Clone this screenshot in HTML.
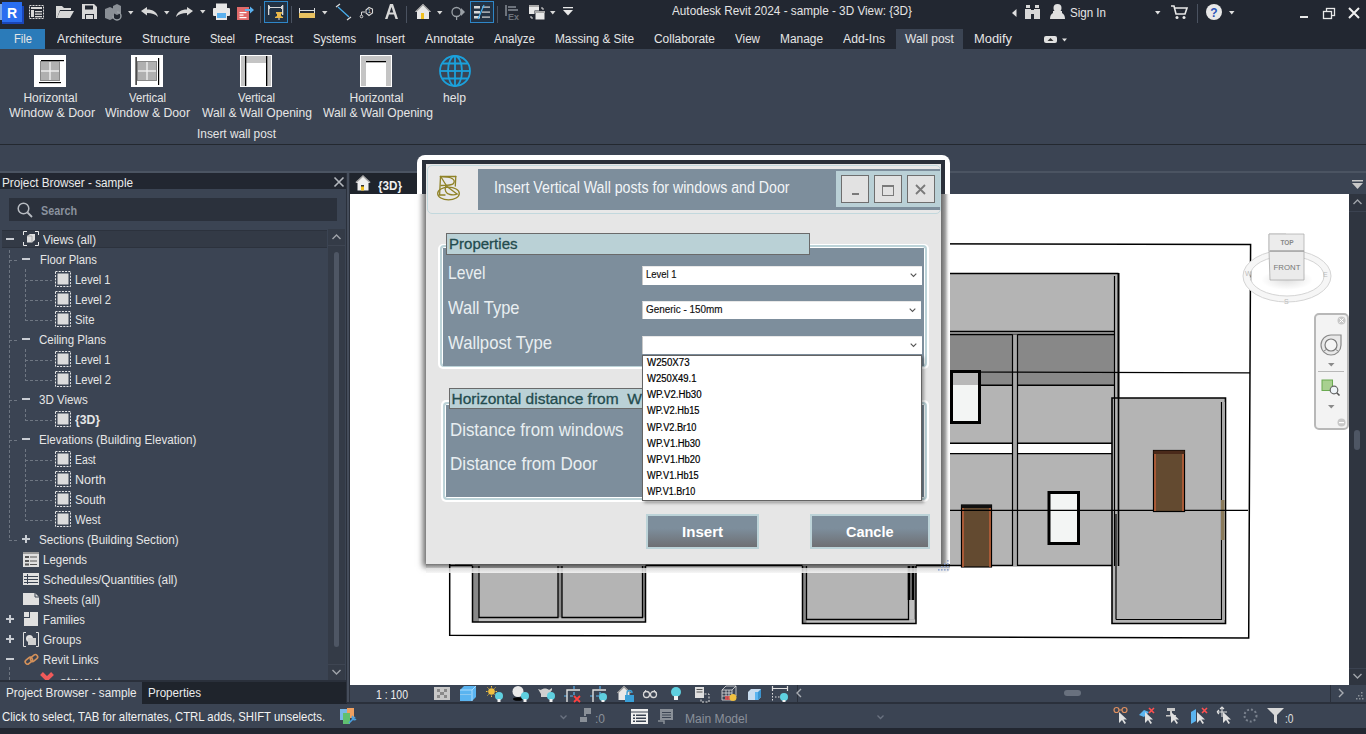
<!DOCTYPE html>
<html><head><meta charset="utf-8">
<style>
*{margin:0;padding:0;box-sizing:border-box}
html,body{width:1366px;height:734px;overflow:hidden;background:#3b4453;font-family:"Liberation Sans",sans-serif;color:#e8e8e8;position:relative}
.a{position:absolute}
.t{position:absolute;white-space:nowrap;line-height:1;transform-origin:0 0}
svg{position:absolute;overflow:visible}
</style></head><body>
<div class="a" style="left:0px;top:0px;width:1366px;height:49px;background:#222731;"></div>
<div class="a" style="left:0px;top:49px;width:1366px;height:95px;background:#3b4453;"></div>
<div class="a" style="left:0px;top:144px;width:1366px;height:1px;background:#23282f;"></div>
<div class="a" style="left:0px;top:145px;width:1366px;height:28px;background:#3b4453;"></div>
<div class="t" style="left:672px;top:4.10px;font-size:13px;color:#e4e4e4;transform:scaleX(0.9034);">Autodesk Revit 2024 - sample - 3D View: {3D}</div>
<div class="a" style="left:0px;top:29px;width:45px;height:20px;background:#2b7bb9;"></div>
<div class="a" style="left:896px;top:29px;width:67px;height:20px;background:#3b4453;"></div>
<div class="t" style="left:14px;top:33.14px;font-size:12px;color:#e6e6e6;transform:scaleX(0.9310);">File</div>
<div class="t" style="left:57px;top:33.14px;font-size:12px;color:#e6e6e6;transform:scaleX(1.0153);">Architecture</div>
<div class="t" style="left:142px;top:33.14px;font-size:12px;color:#e6e6e6;transform:scaleX(0.9860);">Structure</div>
<div class="t" style="left:210px;top:33.14px;font-size:12px;color:#e6e6e6;transform:scaleX(0.9141);">Steel</div>
<div class="t" style="left:255px;top:33.14px;font-size:12px;color:#e6e6e6;transform:scaleX(0.9341);">Precast</div>
<div class="t" style="left:313px;top:33.14px;font-size:12px;color:#e6e6e6;transform:scaleX(0.9346);">Systems</div>
<div class="t" style="left:376px;top:33.14px;font-size:12px;color:#e6e6e6;transform:scaleX(0.9664);">Insert</div>
<div class="t" style="left:425px;top:33.14px;font-size:12px;color:#e6e6e6;transform:scaleX(1.0200);">Annotate</div>
<div class="t" style="left:494px;top:33.14px;font-size:12px;color:#e6e6e6;transform:scaleX(0.9604);">Analyze</div>
<div class="t" style="left:555px;top:33.14px;font-size:12px;color:#e6e6e6;transform:scaleX(0.9871);">Massing &amp; Site</div>
<div class="t" style="left:654px;top:33.14px;font-size:12px;color:#e6e6e6;transform:scaleX(0.9940);">Collaborate</div>
<div class="t" style="left:735px;top:33.14px;font-size:12px;color:#e6e6e6;transform:scaleX(0.9693);">View</div>
<div class="t" style="left:780px;top:33.14px;font-size:12px;color:#e6e6e6;transform:scaleX(0.9917);">Manage</div>
<div class="t" style="left:843px;top:33.14px;font-size:12px;color:#e6e6e6;transform:scaleX(1.0156);">Add-Ins</div>
<div class="t" style="left:905px;top:33.14px;font-size:12px;color:#e6e6e6;">Wall post</div>
<div class="t" style="left:974px;top:33.14px;font-size:12px;color:#e6e6e6;transform:scaleX(1.0752);">Modify</div>
<svg style="left:1044px;top:36px;" width="24" height="8" viewBox="0 0 24 8"><rect x="0" y="0" width="13" height="7" rx="2" fill="#e0e0e0"/><path d="M3.5 5 L6.5 2 L9.5 5Z" fill="#333"/><path d="M18 2.5 L23 2.5 L20.5 5.5Z" fill="#e0e0e0"/></svg>
<svg style="left:34px;top:55px;" width="32" height="32" viewBox="0 0 32 32"><rect width="32" height="32" fill="#fff"/><rect x="7" y="5" width="23" height="1.2" fill="#000"/><rect x="5" y="27" width="22" height="1.2" fill="#000"/><rect x="6.5" y="6.5" width="19" height="19" fill="#b0b0b0" stroke="#888" stroke-width="1"/><rect x="15.3" y="7" width="1.4" height="18" fill="#f0f0f0"/><rect x="7" y="15.3" width="18" height="1.4" fill="#f0f0f0"/></svg>
<svg style="left:131px;top:55px;" width="32" height="32" viewBox="0 0 32 32"><rect width="32" height="32" fill="#fff"/><rect x="4.5" y="2" width="1.2" height="28" fill="#000"/><rect x="27" y="3" width="1.2" height="27" fill="#000"/><rect x="6.5" y="6.5" width="19" height="19" fill="#b0b0b0" stroke="#888" stroke-width="1"/><rect x="15.3" y="7" width="1.4" height="18" fill="#f0f0f0"/><rect x="7" y="15.3" width="18" height="1.4" fill="#f0f0f0"/></svg>
<svg style="left:240px;top:55px;" width="32" height="32" viewBox="0 0 32 32"><rect width="32" height="32" fill="#fff"/><rect x="1" y="1" width="30" height="30" fill="#c4c4c4"/><rect x="6" y="8" width="20" height="23" fill="#fff"/><rect x="5" y="1" width="1.3" height="30" fill="#000"/><rect x="26" y="1" width="1.3" height="30" fill="#000"/></svg>
<svg style="left:360px;top:55px;" width="32" height="32" viewBox="0 0 32 32"><rect width="32" height="32" fill="#fff"/><rect x="1" y="1" width="30" height="30" fill="#c4c4c4"/><rect x="6" y="7" width="20" height="24" fill="#fff"/><rect x="6" y="6" width="20" height="1.3" fill="#000"/></svg>
<svg style="left:439px;top:55px;" width="32" height="32" viewBox="0 0 32 32"><g fill="none" stroke="#1ba1dc" stroke-width="1.8"><circle cx="16" cy="16" r="15"/><ellipse cx="16" cy="16" rx="7" ry="15"/><line x1="16" y1="1" x2="16" y2="31"/><line x1="1" y1="16" x2="31" y2="16"/><path d="M3.5 8.5 H28.5 M3.5 23.5 H28.5"/></g></svg>
<div class="t" style="left:23.4px;top:92.24px;font-size:12px;color:#e6e6e6;">Horizontal</div>
<div class="t" style="left:9px;top:107.14px;font-size:12px;color:#e6e6e6;transform:scaleX(1.0317);">Window &amp; Door</div>
<div class="t" style="left:128.5px;top:92.24px;font-size:12px;color:#e6e6e6;transform:scaleX(0.9403);">Vertical</div>
<div class="t" style="left:104.5px;top:107.14px;font-size:12px;color:#e6e6e6;transform:scaleX(1.0197);">Window &amp; Door</div>
<div class="t" style="left:237.5px;top:92.24px;font-size:12px;color:#e6e6e6;transform:scaleX(0.9403);">Vertical</div>
<div class="t" style="left:202px;top:107.14px;font-size:12px;color:#e6e6e6;transform:scaleX(1.0078);">Wall &amp; Wall Opening</div>
<div class="t" style="left:349.5px;top:92.24px;font-size:12px;color:#e6e6e6;">Horizontal</div>
<div class="t" style="left:322.5px;top:107.14px;font-size:12px;color:#e6e6e6;transform:scaleX(1.0078);">Wall &amp; Wall Opening</div>
<div class="t" style="left:443px;top:92.24px;font-size:12px;color:#e6e6e6;transform:scaleX(1.0139);">help</div>
<div class="t" style="left:197px;top:128.24px;font-size:12px;color:#e6e6e6;transform:scaleX(0.9871);">Insert wall post</div>
<svg style="left:0px;top:2px;" width="24" height="22" viewBox="0 0 24 22"><rect x="0" y="2" width="4" height="16" fill="#7aa7e8"/><rect x="2" y="4" width="22" height="18" fill="#1a46b8"/><rect x="2" y="0" width="20" height="20" fill="#2a6ef0"/><text x="12" y="15.5" font-size="14" font-weight="bold" fill="#fff" text-anchor="middle" font-family="Liberation Sans">R</text></svg>
<svg style="left:29px;top:5px;" width="15" height="14" viewBox="0 0 15 14"><rect x="0.5" y="0.5" width="14" height="13" fill="none" stroke="#d8d8d8" stroke-dasharray="2 1"/><rect x="2" y="2" width="11" height="2" fill="#d8d8d8"/><rect x="2" y="5" width="3" height="7" fill="#d8d8d8"/><rect x="6" y="6" width="7" height="1.3" fill="#d8d8d8"/><rect x="6" y="8.5" width="7" height="1.3" fill="#d8d8d8"/><rect x="6" y="11" width="7" height="1.3" fill="#d8d8d8"/></svg>
<svg style="left:56px;top:5px;" width="18" height="14" viewBox="0 0 18 14"><path d="M0 1 H6 L8 3 H15 V5 H4 L1 13 H0Z" fill="#d8d8d8"/><path d="M4 6 H18 L14 13 H1Z" fill="#d8d8d8"/></svg>
<svg style="left:82px;top:4px;" width="15" height="15" viewBox="0 0 15 15"><path d="M0 0 H12 L15 3 V15 H0Z" fill="#d8d8d8"/><rect x="3" y="1.5" width="8" height="4" fill="#222731"/><rect x="3" y="10" width="9" height="5" fill="#222731"/><rect x="4" y="11" width="7" height="4" fill="#d8d8d8"/></svg>
<svg style="left:105px;top:4px;" width="17" height="16" viewBox="0 0 17 16"><path d="M0 5 L5 3 L9 5 V14 L5 16 L0 14Z" fill="#8a8f96"/><path d="M8 2 L12 0 L16 2 V9 L12 11 L8 9Z" fill="#8a8f96"/><path d="M8 12 A4 4 0 1 0 12 8" stroke="#9aa0a6" stroke-width="1.4" fill="none"/></svg>
<svg style="left:128px;top:11px;" width="6" height="4" viewBox="0 0 6 4"><path d="M0 0 H5.5 L2.75 3.5Z" fill="#d8d8d8"/></svg>
<svg style="left:141px;top:7px;" width="17" height="10" viewBox="0 0 17 10"><path d="M0 4 L6 0 V2.5 C12 2.5 16 5 17 10 C14 7 11 6 6 6 V8.5Z" fill="#d8d8d8"/></svg>
<svg style="left:164px;top:11px;" width="6" height="4" viewBox="0 0 6 4"><path d="M0 0 H5.5 L2.75 3.5Z" fill="#d8d8d8"/></svg>
<svg style="left:176px;top:7px;" width="17" height="10" viewBox="0 0 17 10"><path d="M17 4 L11 0 V2.5 C5 2.5 1 5 0 10 C3 7 6 6 11 6 V8.5Z" fill="#d8d8d8"/></svg>
<svg style="left:200px;top:10px;" width="6" height="4" viewBox="0 0 6 4"><path d="M0 0 H5.5 L2.75 3.5Z" fill="#d8d8d8"/></svg>
<svg style="left:213px;top:3px;" width="17" height="17" viewBox="0 0 17 17"><rect x="3" y="0.5" width="11" height="5" fill="#e8e8e8"/><rect x="0" y="5" width="17" height="8" rx="1" fill="#e8e8e8"/><rect x="3" y="9" width="11" height="8" fill="#e8e8e8"/><rect x="4" y="10" width="9" height="5" fill="#5ab0ee"/></svg>
<svg style="left:237px;top:4px;" width="17" height="16" viewBox="0 0 17 16"><path d="M0 3 H6 L9 6 V16 H0Z" fill="#e06a6a"/><rect x="0" y="3" width="12" height="13" fill="#e06a6a"/><rect x="2.5" y="8" width="7" height="1.2" fill="#fff"/><rect x="2.5" y="10.5" width="4" height="1.2" fill="#fff"/><rect x="2.5" y="13" width="7" height="1.2" fill="#fff"/><path d="M8 5 H13 V2.5 L17 6 L13 9.5 V7 H8Z" fill="#5ab0ee"/></svg>
<div class="a" style="left:260px;top:6px;width:1px;height:17px;background:#4a5260;"></div>
<div class="a" style="left:264px;top:1px;width:24px;height:22px;background:#223244;border:1px solid #2e86c8"></div>
<svg style="left:268px;top:4px;" width="16" height="16" viewBox="0 0 16 16"><rect x="0" y="1" width="1.3" height="10" fill="#d8d8d8"/><rect x="14" y="1" width="1.3" height="10" fill="#d8d8d8"/><rect x="0" y="3" width="15" height="1" fill="#d8d8d8"/><rect x="1" y="2" width="1" height="3" fill="#d8d8d8"/><rect x="13" y="2" width="1" height="3" fill="#d8d8d8"/><path d="M8 8 H14 V9.5 L13 10 V12 L15 13 V14 H7 V13 L9 12 V10 L8 9.5Z" fill="#e8b84a"/><rect x="10.5" y="14" width="1" height="2" fill="#ddd"/></svg>
<div class="a" style="left:291px;top:6px;width:1px;height:17px;background:#4a5260;"></div>
<svg style="left:299px;top:7px;" width="16" height="11" viewBox="0 0 16 11"><rect x="0" y="1" width="1" height="5" fill="#ddd"/><rect x="15" y="1" width="1" height="5" fill="#ddd"/><rect x="0" y="3" width="16" height="1" fill="#ddd"/><rect x="0" y="6" width="16" height="5" fill="#e8c160"/></svg>
<svg style="left:322px;top:11px;" width="6" height="4" viewBox="0 0 6 4"><path d="M0 0 H5.5 L2.75 3.5Z" fill="#d8d8d8"/></svg>
<svg style="left:335px;top:4px;" width="17" height="16" viewBox="0 0 17 16"><path d="M1 3 L5 0 M12 16 L16 13" stroke="#ddd" stroke-width="1.2"/><path d="M3 3 L14 13" stroke="#48b0f0" stroke-width="1.2"/></svg>
<svg style="left:360px;top:7px;" width="14" height="11" viewBox="0 0 14 11"><circle cx="1.5" cy="9.5" r="1.3" fill="none" stroke="#d8d8d8"/><path d="M1.5 8 V5 H5" stroke="#d8d8d8" fill="none"/><path d="M6 3 L9 0.5 L12.5 2 V6 L9 8.5 L6 6Z" fill="none" stroke="#d8d8d8" stroke-width="1.1"/><text x="9.2" y="6.3" font-size="5.5" fill="#d8d8d8" text-anchor="middle" font-family="Liberation Sans">1</text></svg>
<svg style="left:385px;top:4px;" width="13" height="15" viewBox="0 0 13 15"><path d="M0 15 L5 0 H8 L13 15 H10.5 L9 10.5 H4 L2.5 15Z M4.7 8.5 H8.3 L6.5 3Z" fill="#d8d8d8" fill-rule="evenodd"/></svg>
<div class="a" style="left:406px;top:6px;width:1px;height:17px;background:#4a5260;"></div>
<svg style="left:415px;top:4px;" width="16" height="16" viewBox="0 0 16 16"><path d="M0 8 L8 0 L16 8 L14 8 V15 H2 V8Z" fill="#e8e8e8"/><path d="M1 7.5 L8 0.5 L15 7.5" stroke="#9a9a9a" stroke-width="1.2" fill="none"/><rect x="6" y="9" width="3" height="6" fill="#f0c020"/></svg>
<svg style="left:437px;top:11px;" width="6" height="4" viewBox="0 0 6 4"><path d="M0 0 H5.5 L2.75 3.5Z" fill="#d8d8d8"/></svg>
<svg style="left:451px;top:5px;" width="14" height="15" viewBox="0 0 14 15"><circle cx="5.5" cy="7" r="4.5" fill="none" stroke="#9aa0a6" stroke-width="1.3"/><path d="M10 3 L14 7 L10 11" fill="#9aa0a6"/><rect x="5" y="11" width="1.2" height="4" fill="#9aa0a6"/></svg>
<div class="a" style="left:470px;top:1px;width:24px;height:22px;background:#223244;border:1px solid #2e86c8"></div>
<svg style="left:474px;top:5px;" width="16" height="14" viewBox="0 0 16 14"><rect x="0" y="1" width="6" height="2.5" fill="#d8d8d8"/><rect x="0" y="6" width="6" height="2.5" fill="#d8d8d8"/><rect x="0" y="11" width="6" height="2.5" fill="#d8d8d8"/><rect x="8" y="1.5" width="8" height="1.2" fill="#d8d8d8"/><rect x="8" y="6.5" width="8" height="1.2" fill="#d8d8d8"/><rect x="8" y="11.5" width="8" height="1.2" fill="#d8d8d8"/><path d="M4 14 L10 0" stroke="#48b0f0" stroke-width="1.2"/></svg>
<div class="a" style="left:497px;top:6px;width:1px;height:17px;background:#4a5260;"></div>
<svg style="left:505px;top:4px;" width="16" height="16" viewBox="0 0 16 16"><g fill="#6d737c"><rect x="0" y="1" width="2" height="11"/><rect x="3" y="2" width="8" height="2"/><rect x="3" y="5" width="10" height="2"/></g><text x="3" y="16" font-size="9" font-weight="bold" fill="#6d737c" font-family="Liberation Sans">Ex</text></svg>
<svg style="left:529px;top:5px;" width="16" height="14" viewBox="0 0 16 14"><rect x="0" y="0" width="10" height="9" fill="#e8e8e8"/><rect x="0" y="0" width="10" height="2" fill="#aaa"/><rect x="6" y="6" width="10" height="9" fill="#e8e8e8" stroke="#222731" stroke-width="1"/><rect x="6" y="6" width="10" height="2" fill="#aaa"/><path d="M12 3 H14 V5" stroke="#ddd" fill="none"/><path d="M2 11 V13 H4" stroke="#ddd" fill="none"/></svg>
<svg style="left:550px;top:11px;" width="6" height="4" viewBox="0 0 6 4"><path d="M0 0 H5.5 L2.75 3.5Z" fill="#d8d8d8"/></svg>
<svg style="left:563px;top:7px;" width="10" height="9" viewBox="0 0 10 9"><rect x="0" y="0" width="10" height="1.3" fill="#e8e8e8"/><path d="M0 3 H10 L5 8.5Z" fill="#e8e8e8"/></svg>
<svg style="left:1012px;top:9px;" width="5" height="8" viewBox="0 0 5 8"><path d="M4.5 0 V8 L0 4Z" fill="#e0e0e0"/></svg>
<svg style="left:1025px;top:5px;" width="15" height="14" viewBox="0 0 15 14"><g fill="#d8d8d8"><rect x="1" y="0" width="4" height="3"/><rect x="10" y="0" width="4" height="3"/><rect x="0" y="4" width="6" height="10"/><rect x="9" y="4" width="6" height="10"/><rect x="5" y="5" width="5" height="4"/></g></svg>
<svg style="left:1050px;top:4px;" width="15" height="15" viewBox="0 0 15 15"><circle cx="7.5" cy="4" r="4" fill="#e0e0e0"/><path d="M3 7 H12 L12 9 C14 10 15 12 15 15 H0 C0 12 1 10 3 9Z" fill="#e0e0e0"/></svg>
<div class="t" style="left:1070px;top:6.20px;font-size:13px;color:#e6e6e6;transform:scaleX(0.8895);">Sign In</div>
<svg style="left:1155px;top:11px;" width="6" height="4" viewBox="0 0 6 4"><path d="M0 0 H5.5 L2.75 3.5Z" fill="#e0e0e0"/></svg>
<svg style="left:1171px;top:5px;" width="16" height="14" viewBox="0 0 16 14"><path d="M0 1 H3 L5 9 H14 L16 3 H4" stroke="#e8e8e8" stroke-width="1.6" fill="none"/><circle cx="6" cy="12.5" r="1.5" fill="#e8e8e8"/><circle cx="13" cy="12.5" r="1.5" fill="#e8e8e8"/></svg>
<div class="a" style="left:1197px;top:4px;width:1px;height:19px;background:#4a5260;"></div>
<svg style="left:1206px;top:4px;" width="16" height="16" viewBox="0 0 16 16"><circle cx="8" cy="8" r="8" fill="#e8e8e8"/><text x="8" y="12.5" font-size="12" font-weight="bold" fill="#2852b8" text-anchor="middle" font-family="Liberation Sans">?</text></svg>
<svg style="left:1229px;top:11px;" width="6" height="4" viewBox="0 0 6 4"><path d="M0 0 H5.5 L2.75 3.5Z" fill="#e0e0e0"/></svg>
<div class="a" style="left:1300px;top:16px;width:8px;height:2px;background:#e8e8e8;"></div>
<svg style="left:1323px;top:8px;" width="12" height="11" viewBox="0 0 12 11"><rect x="3.5" y="0.5" width="8" height="7" fill="none" stroke="#e8e8e8" stroke-width="1.3"/><rect x="0.5" y="3.5" width="8" height="7" fill="#222731" stroke="#e8e8e8" stroke-width="1.3"/></svg>
<svg style="left:1348px;top:7px;" width="12" height="12" viewBox="0 0 12 12"><path d="M1 1 L11 11 M11 1 L1 11" stroke="#f0f0f0" stroke-width="2"/></svg>
<div class="a" style="left:0px;top:171px;width:1366px;height:2px;background:#4b5462;"></div>
<div class="a" style="left:0px;top:173px;width:347px;height:16px;background:#222731;"></div>
<div class="t" style="left:2px;top:177.14px;font-size:12px;color:#ececec;transform:scaleX(0.9774);">Project Browser - sample</div>
<svg style="left:334px;top:177px;" width="10" height="10" viewBox="0 0 10 10"><path d="M0.5 0.5 L9.5 9.5 M9.5 0.5 L0.5 9.5" stroke="#b4b8be" stroke-width="1.6"/></svg>
<div class="a" style="left:0px;top:189px;width:346px;height:491px;background:#3b4453;"></div>
<div class="a" style="left:9px;top:198px;width:328px;height:23px;background:#2b313c;"></div>
<svg style="left:17px;top:202px;" width="16" height="16" viewBox="0 0 16 16"><circle cx="6.5" cy="6.5" r="5.3" fill="none" stroke="#b8bcc2" stroke-width="1.5"/><path d="M10.5 10.5 L15 15" stroke="#b8bcc2" stroke-width="1.8"/></svg>
<div class="t" style="left:41px;top:205.14px;font-size:12px;color:#8a929e;font-weight:bold;transform:scaleX(0.8995);">Search</div>
<div class="a" style="left:328px;top:229px;width:17px;height:451px;background:#343b47;"></div>
<div class="a" style="left:328px;top:245px;width:17px;height:1px;background:#3e4552;"></div>
<svg style="left:332px;top:234px;" width="9" height="6" viewBox="0 0 9 6"><path d="M0.5 5 L4.5 1 L8.5 5" stroke="#a0a4aa" stroke-width="1.4" fill="none"/></svg>
<div class="a" style="left:334px;top:252px;width:5px;height:395px;background:#4e5664;border-radius:3px"></div>
<div class="a" style="left:328px;top:664px;width:17px;height:1px;background:#3e4552;"></div>
<svg style="left:332px;top:669px;" width="9" height="6" viewBox="0 0 9 6"><path d="M0.5 1 L4.5 5 L8.5 1" stroke="#a0a4aa" stroke-width="1.4" fill="none"/></svg>
<div class="a" style="left:2px;top:230px;width:325px;height:18px;background:#333a46;border-top:1px solid #2c323d;border-bottom:1px solid #2c323d"></div>
<div class="t" style="left:43px;top:234.14px;font-size:12px;color:#e6e6e6;transform:scaleX(0.9615);">Views (all)</div>
<div class="t" style="left:39.5px;top:254.14px;font-size:12px;color:#e6e6e6;transform:scaleX(0.9392);">Floor Plans</div>
<div class="t" style="left:75.2px;top:274.14px;font-size:12px;color:#e6e6e6;transform:scaleX(0.9149);">Level 1</div>
<div class="t" style="left:75.2px;top:294.14px;font-size:12px;color:#e6e6e6;transform:scaleX(0.9304);">Level 2</div>
<div class="t" style="left:75.2px;top:314.14px;font-size:12px;color:#e6e6e6;transform:scaleX(0.9431);">Site</div>
<div class="t" style="left:39px;top:334.14px;font-size:12px;color:#e6e6e6;transform:scaleX(0.9567);">Ceiling Plans</div>
<div class="t" style="left:75.2px;top:354.14px;font-size:12px;color:#e6e6e6;transform:scaleX(0.9149);">Level 1</div>
<div class="t" style="left:75.2px;top:374.14px;font-size:12px;color:#e6e6e6;transform:scaleX(0.9304);">Level 2</div>
<div class="t" style="left:39px;top:394.14px;font-size:12px;color:#e6e6e6;transform:scaleX(0.9650);">3D Views</div>
<div class="t" style="left:75.1px;top:414.14px;font-size:12px;color:#e6e6e6;font-weight:bold;transform:scaleX(1.0129);">{3D}</div>
<div class="t" style="left:39.4px;top:434.14px;font-size:12px;color:#e6e6e6;transform:scaleX(0.9711);">Elevations (Building Elevation)</div>
<div class="t" style="left:75.4px;top:454.14px;font-size:12px;color:#e6e6e6;transform:scaleX(0.8621);">East</div>
<div class="t" style="left:75.4px;top:474.14px;font-size:12px;color:#e6e6e6;transform:scaleX(1.0429);">North</div>
<div class="t" style="left:75.4px;top:494.14px;font-size:12px;color:#e6e6e6;transform:scaleX(0.9758);">South</div>
<div class="t" style="left:75.4px;top:514.14px;font-size:12px;color:#e6e6e6;transform:scaleX(0.9441);">West</div>
<div class="t" style="left:39.4px;top:534.14px;font-size:12px;color:#e6e6e6;transform:scaleX(0.9735);">Sections (Building Section)</div>
<div class="t" style="left:43px;top:554.14px;font-size:12px;color:#e6e6e6;transform:scaleX(0.9557);">Legends</div>
<div class="t" style="left:43px;top:574.14px;font-size:12px;color:#e6e6e6;transform:scaleX(0.9823);">Schedules/Quantities (all)</div>
<div class="t" style="left:43px;top:594.14px;font-size:12px;color:#e6e6e6;transform:scaleX(0.9425);">Sheets (all)</div>
<div class="t" style="left:43px;top:614.14px;font-size:12px;color:#e6e6e6;transform:scaleX(0.9402);">Families</div>
<div class="t" style="left:43px;top:634.14px;font-size:12px;color:#e6e6e6;transform:scaleX(0.9708);">Groups</div>
<div class="t" style="left:43px;top:654.14px;font-size:12px;color:#e6e6e6;transform:scaleX(0.9474);">Revit Links</div>
<div class="a" style="left:6px;top:238px;width:8px;height:2px;background:#c8ccd2;"></div>
<div class="a" style="left:22px;top:258px;width:8px;height:2px;background:#c8ccd2;"></div>
<div class="a" style="left:22px;top:338px;width:8px;height:2px;background:#c8ccd2;"></div>
<div class="a" style="left:22px;top:398px;width:8px;height:2px;background:#c8ccd2;"></div>
<div class="a" style="left:22px;top:438px;width:8px;height:2px;background:#c8ccd2;"></div>
<div class="a" style="left:22px;top:538px;width:8px;height:2px;background:#c8ccd2;"></div>
<div class="a" style="left:25px;top:535px;width:2px;height:8px;background:#c8ccd2;"></div>
<div class="a" style="left:6px;top:618px;width:8px;height:2px;background:#c8ccd2;"></div>
<div class="a" style="left:9px;top:615px;width:2px;height:8px;background:#c8ccd2;"></div>
<div class="a" style="left:6px;top:638px;width:8px;height:2px;background:#c8ccd2;"></div>
<div class="a" style="left:9px;top:635px;width:2px;height:8px;background:#c8ccd2;"></div>
<div class="a" style="left:6px;top:658px;width:8px;height:2px;background:#c8ccd2;"></div>
<div class="a" style="left:9px;top:250px;width:1px;height:290px;background:repeating-linear-gradient(180deg,#6e7682 0 3px,transparent 3px 5px);"></div>
<div class="a" style="left:9px;top:260px;width:10px;height:1px;background:repeating-linear-gradient(90deg,#6e7682 0 3px,transparent 3px 5px);"></div>
<div class="a" style="left:9px;top:340px;width:10px;height:1px;background:repeating-linear-gradient(90deg,#6e7682 0 3px,transparent 3px 5px);"></div>
<div class="a" style="left:9px;top:400px;width:10px;height:1px;background:repeating-linear-gradient(90deg,#6e7682 0 3px,transparent 3px 5px);"></div>
<div class="a" style="left:9px;top:440px;width:10px;height:1px;background:repeating-linear-gradient(90deg,#6e7682 0 3px,transparent 3px 5px);"></div>
<div class="a" style="left:9px;top:540px;width:10px;height:1px;background:repeating-linear-gradient(90deg,#6e7682 0 3px,transparent 3px 5px);"></div>
<div class="a" style="left:25px;top:269px;width:1px;height:51px;background:repeating-linear-gradient(180deg,#6e7682 0 3px,transparent 3px 5px);"></div>
<div class="a" style="left:25px;top:349px;width:1px;height:31px;background:repeating-linear-gradient(180deg,#6e7682 0 3px,transparent 3px 5px);"></div>
<div class="a" style="left:25px;top:409px;width:1px;height:11px;background:repeating-linear-gradient(180deg,#6e7682 0 3px,transparent 3px 5px);"></div>
<div class="a" style="left:25px;top:449px;width:1px;height:71px;background:repeating-linear-gradient(180deg,#6e7682 0 3px,transparent 3px 5px);"></div>
<div class="a" style="left:25px;top:280px;width:27px;height:1px;background:repeating-linear-gradient(90deg,#6e7682 0 3px,transparent 3px 5px);"></div>
<div class="a" style="left:25px;top:300px;width:27px;height:1px;background:repeating-linear-gradient(90deg,#6e7682 0 3px,transparent 3px 5px);"></div>
<div class="a" style="left:25px;top:320px;width:27px;height:1px;background:repeating-linear-gradient(90deg,#6e7682 0 3px,transparent 3px 5px);"></div>
<div class="a" style="left:25px;top:360px;width:27px;height:1px;background:repeating-linear-gradient(90deg,#6e7682 0 3px,transparent 3px 5px);"></div>
<div class="a" style="left:25px;top:380px;width:27px;height:1px;background:repeating-linear-gradient(90deg,#6e7682 0 3px,transparent 3px 5px);"></div>
<div class="a" style="left:25px;top:420px;width:27px;height:1px;background:repeating-linear-gradient(90deg,#6e7682 0 3px,transparent 3px 5px);"></div>
<div class="a" style="left:25px;top:460px;width:27px;height:1px;background:repeating-linear-gradient(90deg,#6e7682 0 3px,transparent 3px 5px);"></div>
<div class="a" style="left:25px;top:480px;width:27px;height:1px;background:repeating-linear-gradient(90deg,#6e7682 0 3px,transparent 3px 5px);"></div>
<div class="a" style="left:25px;top:500px;width:27px;height:1px;background:repeating-linear-gradient(90deg,#6e7682 0 3px,transparent 3px 5px);"></div>
<div class="a" style="left:25px;top:520px;width:27px;height:1px;background:repeating-linear-gradient(90deg,#6e7682 0 3px,transparent 3px 5px);"></div>
<div class="a" style="left:9px;top:667px;width:1px;height:13px;background:repeating-linear-gradient(180deg,#6e7682 0 3px,transparent 3px 5px);"></div>
<svg style="left:55px;top:271px;" width="16" height="16" viewBox="0 0 16 16"><rect x="0.5" y="0.5" width="15" height="15" fill="none" stroke="#e8e8e8" stroke-dasharray="2 1.2"/><rect x="2.5" y="2.5" width="11" height="11" fill="#dcdcdc"/></svg>
<svg style="left:55px;top:291px;" width="16" height="16" viewBox="0 0 16 16"><rect x="0.5" y="0.5" width="15" height="15" fill="none" stroke="#e8e8e8" stroke-dasharray="2 1.2"/><rect x="2.5" y="2.5" width="11" height="11" fill="#dcdcdc"/></svg>
<svg style="left:55px;top:311px;" width="16" height="16" viewBox="0 0 16 16"><rect x="0.5" y="0.5" width="15" height="15" fill="none" stroke="#e8e8e8" stroke-dasharray="2 1.2"/><rect x="2.5" y="2.5" width="11" height="11" fill="#dcdcdc"/></svg>
<svg style="left:55px;top:351px;" width="16" height="16" viewBox="0 0 16 16"><rect x="0.5" y="0.5" width="15" height="15" fill="none" stroke="#e8e8e8" stroke-dasharray="2 1.2"/><rect x="2.5" y="2.5" width="11" height="11" fill="#dcdcdc"/></svg>
<svg style="left:55px;top:371px;" width="16" height="16" viewBox="0 0 16 16"><rect x="0.5" y="0.5" width="15" height="15" fill="none" stroke="#e8e8e8" stroke-dasharray="2 1.2"/><rect x="2.5" y="2.5" width="11" height="11" fill="#dcdcdc"/></svg>
<svg style="left:55px;top:411px;" width="16" height="16" viewBox="0 0 16 16"><rect x="0.5" y="0.5" width="15" height="15" fill="none" stroke="#e8e8e8" stroke-dasharray="2 1.2"/><rect x="2.5" y="2.5" width="11" height="11" fill="#dcdcdc"/></svg>
<svg style="left:55px;top:451px;" width="16" height="16" viewBox="0 0 16 16"><rect x="0.5" y="0.5" width="15" height="15" fill="none" stroke="#e8e8e8" stroke-dasharray="2 1.2"/><rect x="2.5" y="2.5" width="11" height="11" fill="#dcdcdc"/></svg>
<svg style="left:55px;top:471px;" width="16" height="16" viewBox="0 0 16 16"><rect x="0.5" y="0.5" width="15" height="15" fill="none" stroke="#e8e8e8" stroke-dasharray="2 1.2"/><rect x="2.5" y="2.5" width="11" height="11" fill="#dcdcdc"/></svg>
<svg style="left:55px;top:491px;" width="16" height="16" viewBox="0 0 16 16"><rect x="0.5" y="0.5" width="15" height="15" fill="none" stroke="#e8e8e8" stroke-dasharray="2 1.2"/><rect x="2.5" y="2.5" width="11" height="11" fill="#dcdcdc"/></svg>
<svg style="left:55px;top:511px;" width="16" height="16" viewBox="0 0 16 16"><rect x="0.5" y="0.5" width="15" height="15" fill="none" stroke="#e8e8e8" stroke-dasharray="2 1.2"/><rect x="2.5" y="2.5" width="11" height="11" fill="#dcdcdc"/></svg>
<svg style="left:23px;top:231px;" width="16" height="15" viewBox="0 0 16 15"><path d="M0.5 4 V0.5 H4 M12 0.5 H15.5 V4 M15.5 11 V14.5 H12 M4 14.5 H0.5 V11" stroke="#e8e8e8" fill="none"/><path d="M4 5 L7 3 H12 V9 L9 11.5 H4Z" fill="#dedede"/><path d="M4 5 H9 V11.5" stroke="#9a9a9a" fill="none" stroke-width="0.7"/></svg>
<svg style="left:23px;top:552px;" width="16" height="15" viewBox="0 0 16 15"><rect x="0" y="0" width="16" height="15" fill="#e0e0e0"/><rect x="0" y="0" width="16" height="2" fill="#9a9a9a"/><g fill="#555"><rect x="2" y="4" width="4" height="2"/><rect x="7" y="4.5" width="7" height="1"/><rect x="2" y="8" width="4" height="2"/><rect x="7" y="8.5" width="7" height="1"/><rect x="2" y="11.5" width="4" height="2"/><rect x="7" y="12" width="7" height="1"/></g></svg>
<svg style="left:23px;top:573px;" width="16" height="12" viewBox="0 0 16 12"><rect x="0" y="0" width="16" height="12" fill="#e0e0e0"/><g fill="#3b4453"><rect x="1" y="3" width="14" height="1"/><rect x="1" y="6" width="14" height="1"/><rect x="1" y="9" width="14" height="1"/><rect x="4" y="1" width="1" height="10"/></g></svg>
<svg style="left:23px;top:593px;" width="16" height="12" viewBox="0 0 16 12"><path d="M0 0 H12 L16 4 V12 H0Z" fill="#e0e0e0"/><path d="M12 0 V4 H16" stroke="#3b4453" fill="none"/></svg>
<svg style="left:24px;top:612px;" width="14" height="14" viewBox="0 0 14 14"><rect x="0" y="6" width="14" height="8" fill="#e0e0e0"/><rect x="6" y="0" width="8" height="14" fill="#e0e0e0"/><rect x="0" y="0" width="5" height="5" fill="#e0e0e0"/></svg>
<svg style="left:23px;top:632px;" width="16" height="15" viewBox="0 0 16 15"><path d="M3 0.5 H0.5 V14.5 H3 M13 0.5 H15.5 V14.5 H13" stroke="#e0e0e0" fill="none"/><circle cx="6.5" cy="6.5" r="3.5" fill="#e0e0e0"/><rect x="5" y="6" width="8" height="7" fill="#d0d0d0"/></svg>
<svg style="left:24px;top:653px;" width="15" height="13" viewBox="0 0 15 13"><g fill="none" stroke="#d4915a" stroke-width="1.6"><rect x="0.8" y="5.5" width="8" height="4.5" rx="2.2" transform="rotate(-40 4.8 7.7)"/><rect x="6" y="2.8" width="8" height="4.5" rx="2.2" transform="rotate(-40 10 5)"/></g></svg>
<svg style="left:40px;top:672px;" width="14" height="8" viewBox="0 0 14 8"><path d="M1.5 1.5 L7 7 L12.5 1.5" stroke="#f05a5a" stroke-width="4" fill="none"/></svg>
<div class="t" style="left:60px;top:676.14px;font-size:12px;color:#e6e6e6;transform:scaleX(1.1386);">strucut</div>
<div class="a" style="left:0px;top:680px;width:347px;height:2px;background:#2a303b;"></div>
<div class="a" style="left:0px;top:682px;width:142px;height:22px;background:#3b4453;"></div>
<div class="a" style="left:142px;top:682px;width:205px;height:21.5px;background:#1f242c;"></div>
<div class="t" style="left:5.6px;top:687.34px;font-size:12px;color:#ececec;transform:scaleX(0.9736);">Project Browser - sample</div>
<div class="t" style="left:148.2px;top:687.34px;font-size:12px;color:#ececec;transform:scaleX(0.9691);">Properties</div>
<div class="a" style="left:346px;top:173px;width:4px;height:530px;background:#2a303b;"></div>
<div class="a" style="left:347px;top:173px;width:2px;height:530px;background:#454d5b;"></div>
<div class="a" style="left:350px;top:173px;width:1016px;height:21px;background:#3b4453;"></div>
<div class="a" style="left:350px;top:173px;width:80px;height:21px;background:#1f242c;"></div>
<svg style="left:355px;top:175px;" width="16" height="16" viewBox="0 0 16 16"><path d="M0.5 8 L8 0.8 L15.5 8 H13.5 V15.5 H2.5 V8Z" fill="#f0f0f0"/><path d="M1 7.5 L8 1 L15 7.5" stroke="#a8a8a8" stroke-width="1.5" fill="none"/><rect x="6" y="10" width="3" height="5.5" fill="#f0c020"/><rect x="6" y="10" width="3" height="1.5" fill="#333"/></svg>
<div class="t" style="left:378px;top:179.64px;font-size:12px;color:#f0f0f0;font-weight:bold;transform:scaleX(0.9724);">{3D}</div>
<svg style="left:1352px;top:180px;" width="11" height="9" viewBox="0 0 11 9"><rect x="0" y="0" width="11" height="1.5" fill="#c8c8c8"/><path d="M0 3 H11 L5.5 9Z" fill="#c8c8c8"/></svg>
<div class="a" style="left:350px;top:194px;width:999px;height:491px;background:#ffffff;"></div>
<div class="a" style="left:1349px;top:194px;width:17px;height:491px;background:#2f3540;"></div>
<svg style="left:1353px;top:199px;" width="9" height="6" viewBox="0 0 9 6"><path d="M0.5 5 L4.5 1 L8.5 5" stroke="#a0a4aa" stroke-width="1.4" fill="none"/></svg>
<div class="a" style="left:1349px;top:211px;width:17px;height:1px;background:#3b4250;"></div>
<div class="a" style="left:1354px;top:430px;width:6px;height:20px;background:#4e5664;border-radius:3px"></div>
<div class="a" style="left:1349px;top:668px;width:17px;height:1px;background:#3b4250;"></div>
<svg style="left:1353px;top:673px;" width="9" height="6" viewBox="0 0 9 6"><path d="M0.5 1 L4.5 5 L8.5 1" stroke="#a0a4aa" stroke-width="1.4" fill="none"/></svg>
<div class="a" style="left:350px;top:685px;width:1016px;height:17px;background:#3b4453;"></div>
<div class="t" style="left:376px;top:688.64px;font-size:12px;color:#f0f0f0;transform:scaleX(0.8721);">1 : 100</div>
<div class="a" style="left:1064px;top:690px;width:17px;height:6px;background:#69717e;border-radius:3px"></div>
<div class="a" style="left:1330px;top:685px;width:1px;height:17px;background:#2a303b;"></div>
<svg style="left:1338px;top:688px;" width="6" height="10" viewBox="0 0 6 10"><path d="M1 1 L5 5 L1 9" stroke="#a8acb2" stroke-width="1.4" fill="none"/></svg>
<svg style="left:1356px;top:692px;" width="8" height="8" viewBox="0 0 8 8"><g fill="#8a9098"><rect x="5" y="0" width="1.5" height="1.5"/><rect x="2" y="3" width="1.5" height="1.5"/><rect x="5" y="3" width="1.5" height="1.5"/><rect x="0" y="6" width="1.5" height="1.5"/><rect x="3" y="6" width="1.5" height="1.5"/><rect x="6" y="6" width="1.5" height="1.5"/></g></svg>
<div class="a" style="left:797px;top:685px;width:1px;height:17px;background:#2a303b;"></div>
<svg style="left:796px;top:688px;" width="6" height="10" viewBox="0 0 6 10"><path d="M5 1 L1 5 L5 9" stroke="#a8acb2" stroke-width="1.4" fill="none"/></svg>
<div class="a" style="left:347px;top:702px;width:1019px;height:2px;background:#2a303b;"></div>
<div class="a" style="left:0px;top:704px;width:1366px;height:24px;background:#3b4453;"></div>
<div class="a" style="left:0px;top:728px;width:1366px;height:6px;background:#222731;"></div>
<div class="t" style="left:2px;top:711.14px;font-size:12px;color:#f2f2f2;transform:scaleX(0.9454);">Click to select, TAB for alternates, CTRL adds, SHIFT unselects.</div>
<svg style="left:434px;top:687px;" width="16" height="14" viewBox="0 0 16 14"><rect x="0" y="0" width="16" height="13" fill="#c8c8c8"/><g fill="#8a8a8a"><rect x="3" y="2" width="3" height="3"/><rect x="10" y="2" width="3" height="3"/><rect x="6" y="5" width="4" height="3"/><rect x="3" y="8" width="3" height="3"/><rect x="10" y="8" width="3" height="3"/></g></svg>
<svg style="left:460px;top:686px;" width="16" height="15" viewBox="0 0 16 15"><path d="M0 4 L4 0 H16 V11 L12 15 H0Z" fill="#5ab4f0"/><path d="M0 4 H12 V15 M12 4 L16 0" stroke="#a8dcff" fill="none"/><rect x="0" y="8" width="12" height="1" fill="#8cc8f0"/></svg>
<svg style="left:486px;top:686px;" width="11" height="11" viewBox="0 0 11 11"><circle cx="5.5" cy="5.5" r="3.3" fill="#f0c040"/><g stroke="#f0c040" stroke-width="1"><path d="M5.5 0 V1.5 M5.5 9.5 V11 M0 5.5 H1.5 M9.5 5.5 H11 M1.5 1.5 L2.5 2.5 M8.5 8.5 L9.5 9.5 M9.5 1.5 L8.5 2.5 M1.5 9.5 L2.5 8.5"/></g></svg>
<svg style="left:495px;top:692px;" width="8" height="10" viewBox="0 0 8 10"><circle cx="4" cy="4" r="4" fill="#5fd0e0"/><rect x="2.5" y="7" width="3" height="3" fill="#f0f0f0"/></svg>
<svg style="left:512px;top:686px;" width="12" height="15" viewBox="0 0 12 15"><circle cx="6" cy="5.5" r="5.5" fill="#e8e8e8"/><ellipse cx="6" cy="13" rx="5" ry="1.8" fill="#000"/></svg>
<svg style="left:521px;top:692px;" width="8" height="10" viewBox="0 0 8 10"><circle cx="4" cy="4" r="4" fill="#5fd0e0"/><rect x="2.5" y="7" width="3" height="3" fill="#f0f0f0"/></svg>
<svg style="left:538px;top:688px;" width="14" height="10" viewBox="0 0 14 10"><path d="M0 1 L3 2 C5 0 9 0 11 2 L14 0 V2 L11 6 H3Z" fill="#d0d0d0"/><rect x="3" y="6" width="8" height="3" fill="#d0d0d0"/></svg>
<svg style="left:547px;top:692px;" width="8" height="10" viewBox="0 0 8 10"><circle cx="4" cy="4" r="4" fill="#5fd0e0"/><rect x="2.5" y="7" width="3" height="3" fill="#f0f0f0"/></svg>
<svg style="left:564px;top:686px;" width="18" height="16" viewBox="0 0 18 16"><path d="M10 0 V3 M10 6 V9 M0 10 H3 M6 10 H9" stroke="#5ab4f0" stroke-width="1.2"/><path d="M3 16 V4 H16" stroke="#e0e0e0" stroke-width="1.4" fill="none"/><path d="M10 10 L16 16 M16 10 L10 16" stroke="#ff4040" stroke-width="1.8"/></svg>
<svg style="left:590px;top:686px;" width="18" height="16" viewBox="0 0 18 16"><path d="M10 0 V3 M10 6 V9 M0 10 H3 M6 10 H9" stroke="#5ab4f0" stroke-width="1.2"/><path d="M3 16 V4 H16" stroke="#e0e0e0" stroke-width="1.4" fill="none"/><circle cx="13" cy="11" r="4" fill="#5fd0e0"/><rect x="11.5" y="14" width="3" height="2" fill="#f0f0f0"/></svg>
<svg style="left:617px;top:686px;" width="17" height="16" viewBox="0 0 17 16"><path d="M0 7 L7 0 L14 7 H12.5 V14 H1.5 V7Z" fill="#e8e8e8"/><path d="M0.5 7 L7 0.7 L13.5 7" stroke="#9a9a9a" stroke-width="1.4" fill="none"/><rect x="8" y="9" width="9" height="7" fill="#3aa0d8"/><path d="M10 9 V7 A2.5 2.5 0 0 1 15 7" stroke="#3aa0d8" fill="none" stroke-width="1.4"/></svg>
<svg style="left:643px;top:690px;" width="14" height="8" viewBox="0 0 14 8"><circle cx="3.5" cy="4.5" r="3" fill="none" stroke="#d8d8d8" stroke-width="1.3"/><circle cx="10.5" cy="4.5" r="3" fill="none" stroke="#d8d8d8" stroke-width="1.3"/><path d="M6.5 4 H7.5 M0.5 3 L3 0 M13.5 3 L11 0" stroke="#d8d8d8"/></svg>
<svg style="left:671px;top:687px;" width="10" height="14" viewBox="0 0 10 14"><circle cx="5" cy="5" r="5" fill="#5fd0e0"/><rect x="3" y="9" width="4" height="4" fill="#f0f0f0"/></svg>
<svg style="left:695px;top:687px;" width="14" height="15" viewBox="0 0 14 15"><rect x="0" y="0" width="9" height="11" fill="#e0e0e0"/><rect x="1.5" y="2" width="6" height="1" fill="#555"/><rect x="1.5" y="4.5" width="6" height="1" fill="#555"/><path d="M6 7 H14 V15 H6Z" stroke="#e0e0e0" stroke-dasharray="2 1.5" fill="none"/></svg>
<svg style="left:720px;top:686px;" width="17" height="16" viewBox="0 0 17 16"><path d="M2 14 V4 L6 0 H16 V10 L12 14Z M2 4 H12 V14 M12 4 L16 0 M6 4 V14 M9 4 V14 M2 7 H12 M2 10 H12" stroke="#e0e0e0" fill="none" stroke-width="0.8"/><rect x="5" y="10" width="5" height="4" fill="#e04848" opacity="0.8"/><circle cx="13" cy="11.5" r="3.5" fill="#f0c040"/></svg>
<svg style="left:748px;top:689px;" width="13" height="11" viewBox="0 0 13 11"><path d="M0 3 L3 0 H13 V8 L10 11 H0Z" fill="#c8dcef"/><path d="M7 3 H10 V11 H7Z" fill="#5ab4f0"/><path d="M10 3 L13 0 V8 L10 11Z" fill="#3a94d0"/></svg>
<svg style="left:772px;top:686px;" width="17" height="16" viewBox="0 0 17 16"><path d="M0.5 0 V5 M15.5 0 V5 M0.5 2.5 H15.5" stroke="#e0e0e0" stroke-width="1.2"/><path d="M0.5 7 V15 M3 11 H9" stroke="#e0e0e0" stroke-dasharray="1.5 1.5"/><circle cx="12" cy="11" r="4" fill="#5fd0e0"/><rect x="10.5" y="14" width="3" height="2" fill="#f0f0f0"/></svg>
<svg style="left:340px;top:708px;" width="17" height="16" viewBox="0 0 17 16"><rect x="0" y="1" width="7" height="11" fill="#7ab8e8"/><rect x="7" y="0" width="7" height="10" fill="#f0a060"/><rect x="3" y="5" width="7" height="11" fill="#60c070"/><path d="M9 15 L15 9 M13 8 A2 2 0 1 0 16 11" stroke="#4aa0e0" stroke-width="1.6" fill="none"/></svg>
<svg style="left:560px;top:715px;" width="7" height="5" viewBox="0 0 7 5"><path d="M0.5 0.5 L3.5 3.5 L6.5 0.5" stroke="#6a7280" stroke-width="1.3" fill="none"/></svg>
<svg style="left:580px;top:708px;" width="11" height="14" viewBox="0 0 11 14"><path d="M4 0 H11 V6 H6 V8 H4Z M0 9 H7 V14 H0Z" fill="#8a9098"/></svg>
<div class="t" style="left:595px;top:712.64px;font-size:12px;color:#8a9098;">:0</div>
<svg style="left:631px;top:709px;" width="17" height="15" viewBox="0 0 17 15"><rect x="0" y="0" width="17" height="15" fill="#f0f0f0"/><g fill="#3b4453"><rect x="0" y="2.5" width="17" height="1"/><rect x="2" y="5.5" width="2" height="1.5"/><rect x="5" y="5.5" width="10" height="1.5"/><rect x="2" y="8.5" width="2" height="1.5"/><rect x="5" y="8.5" width="10" height="1.5"/><rect x="2" y="11.5" width="2" height="1.5"/><rect x="5" y="11.5" width="10" height="1.5"/></g></svg>
<svg style="left:658px;top:709px;" width="15" height="15" viewBox="0 0 15 15"><rect x="2" y="0" width="13" height="11" fill="#8a9098"/><g fill="#3b4453"><rect x="4" y="3" width="9" height="1"/><rect x="4" y="5.5" width="9" height="1"/><rect x="4" y="8" width="9" height="1"/></g><path d="M0 12 H6 V15" stroke="#8a9098" stroke-width="1.5" fill="none"/></svg>
<div class="t" style="left:685px;top:713.14px;font-size:12px;color:#8a909a;transform:scaleX(1.0077);">Main Model</div>
<svg style="left:877px;top:715px;" width="7" height="5" viewBox="0 0 7 5"><path d="M0.5 0.5 L3.5 3.5 L6.5 0.5" stroke="#6a7280" stroke-width="1.3" fill="none"/></svg>
<svg style="left:1113px;top:707px;" width="15" height="17" viewBox="0 0 15 17"><path d="M1 3 A2.5 2.5 0 0 1 6 3 A2.5 2.5 0 0 1 1 3 M6 3 H9 A2.5 2.5 0 0 1 14 3 A2.5 2.5 0 0 1 9 3" stroke="#e09060" fill="none" stroke-width="1.2"/><path d="M6 5 V16 L9 13 L11.5 17 L13 16 L10.5 12.5 H14Z" fill="#e0e0e0"/></svg>
<svg style="left:1139px;top:707px;" width="16" height="17" viewBox="0 0 16 17"><path d="M0 8 L5 3 L10 5 L5 10Z" fill="#5ab4f0"/><path d="M10 1 L15 6 M15 1 L10 6" stroke="#ff5050" stroke-width="1.6"/><path d="M6 5 V16 L9 13 L11.5 17 L13 16 L10.5 12.5 H14Z" fill="#e0e0e0"/></svg>
<svg style="left:1166px;top:707px;" width="14" height="17" viewBox="0 0 14 17"><rect x="1" y="1" width="8" height="3" fill="#c8c8c8"/><rect x="4" y="4" width="2" height="5" fill="#c8c8c8"/><rect x="0" y="8" width="10" height="1.5" fill="#c8c8c8"/><path d="M5 5 V16 L8 13 L10.5 17 L12 16 L9.5 12.5 H13Z" fill="#e0e0e0"/></svg>
<svg style="left:1191px;top:707px;" width="17" height="17" viewBox="0 0 17 17"><path d="M0 5 L5 2 V14 L0 17Z" fill="#5ab4f0"/><path d="M11 1 L16 6 M16 1 L11 6" stroke="#ff5050" stroke-width="1.6"/><path d="M6 5 V16 L9 13 L11.5 17 L13 16 L10.5 12.5 H14Z" fill="#e0e0e0"/></svg>
<svg style="left:1217px;top:707px;" width="15" height="17" viewBox="0 0 15 17"><path d="M5 0 V10 M0 5 H10 M3 2 L5 0 L7 2 M0 5 L2 3 M0 5 L2 7" stroke="#e0e0e0" fill="none" stroke-width="1.1"/><path d="M6 5 V16 L9 13 L11.5 17 L13 16 L10.5 12.5 H14Z" fill="#e0e0e0"/></svg>
<svg style="left:1243px;top:708px;" width="15" height="15" viewBox="0 0 15 15"><circle cx="7.5" cy="7.5" r="6" fill="none" stroke="#7a828e" stroke-width="2" stroke-dasharray="2 2"/></svg>
<svg style="left:1267px;top:708px;" width="17" height="16" viewBox="0 0 17 16"><path d="M0 0 H17 L10 7 V16 L7 14 V7Z" fill="#d8d8d8"/></svg>
<div class="t" style="left:1285px;top:712.64px;font-size:12px;color:#e0e0e0;transform:scaleX(0.8494);">:0</div>
<svg style="left:350px;top:194px" width="999" height="491" viewBox="350 194 999 491"><path d="M449.7 243 L1250.6 244.5 L1248.7 638 L449.7 635.2Z" fill="none" stroke="#000" stroke-width="1.5"/><rect x="455" y="273.5" width="663.5" height="292.5" fill="#b4b4b4" stroke="none" stroke-width="1"/><rect x="455" y="334.5" width="660" height="50.5" fill="#888888" stroke="none" stroke-width="1"/><rect x="455" y="443.5" width="660" height="10.0" fill="#ffffff" stroke="none" stroke-width="1"/><line x1="455" y1="273.5" x2="1118.5" y2="273.5" stroke="#000" stroke-width="1.6"/><line x1="1118.5" y1="273" x2="1118.5" y2="566" stroke="#000" stroke-width="1.6"/><line x1="1114.5" y1="398" x2="1114.5" y2="566" stroke="#000" stroke-width="1.2"/><line x1="1114.5" y1="276" x2="1114.5" y2="566" stroke="#000" stroke-width="1.2"/><line x1="455" y1="331.5" x2="1114.5" y2="331.5" stroke="#000" stroke-width="1.4"/><line x1="455" y1="334.5" x2="1114.5" y2="334.5" stroke="#000" stroke-width="1.4"/><line x1="455" y1="385.3" x2="1114.5" y2="385.3" stroke="#000" stroke-width="1.4"/><line x1="455" y1="443.3" x2="1114.5" y2="443.3" stroke="#000" stroke-width="1.4"/><line x1="455" y1="453.6" x2="1114.5" y2="453.6" stroke="#000" stroke-width="1.4"/><line x1="449" y1="565.5" x2="472.5" y2="565.5" stroke="#000" stroke-width="1.6"/><line x1="645.5" y1="565.5" x2="802.5" y2="565.5" stroke="#000" stroke-width="1.6"/><line x1="916" y1="565.5" x2="1118.5" y2="565.5" stroke="#000" stroke-width="1.6"/><rect x="1012.5" y="334.5" width="5.0" height="231.5" fill="#a8a8a8" stroke="none" stroke-width="1"/><line x1="1012.5" y1="334.5" x2="1012.5" y2="566" stroke="#000" stroke-width="1.2"/><line x1="1017.5" y1="334.5" x2="1017.5" y2="566" stroke="#000" stroke-width="1.2"/><line x1="941" y1="372" x2="1250" y2="372.8" stroke="#000" stroke-width="1.2"/><rect x="951.5" y="371.5" width="28.0" height="51.0" fill="#f3f5f4" stroke="#000" stroke-width="3"/><rect x="953" y="373" width="25" height="12" fill="#b8b8b8" stroke="none" stroke-width="1"/><rect x="961.5" y="505" width="30.0" height="62" fill="#634a30" stroke="#000" stroke-width="1.2"/><rect x="961.5" y="505" width="30.0" height="3" fill="#111" stroke="none" stroke-width="1"/><line x1="963" y1="508" x2="963" y2="567" stroke="#c0603a" stroke-width="1.5"/><line x1="990" y1="508" x2="990" y2="567" stroke="#c0603a" stroke-width="1.5"/><rect x="1049" y="492.5" width="29.5" height="51.0" fill="#f3f5f4" stroke="#000" stroke-width="3"/><rect x="1112" y="398" width="113.5" height="225.5" fill="#b4b4b4" stroke="none" stroke-width="1"/><path d="M1112 398 H1225.5 V623.5 H1112Z" fill="none" stroke="#000" stroke-width="1.6"/><line x1="1221.5" y1="402" x2="1221.5" y2="620" stroke="#000" stroke-width="1.2"/><line x1="1116" y1="619.5" x2="1221.5" y2="619.5" stroke="#000" stroke-width="1.2"/><line x1="1116" y1="514" x2="1116" y2="619.5" stroke="#000" stroke-width="1.2"/><line x1="1118.5" y1="273" x2="1118.5" y2="566" stroke="#000" stroke-width="1.6"/><line x1="1114.5" y1="398" x2="1114.5" y2="566" stroke="#000" stroke-width="1.2"/><rect x="1222" y="402" width="3" height="218" fill="#a8a8a8" stroke="none" stroke-width="1"/><rect x="1221" y="500" width="3.5" height="40" fill="#8a7a5a" stroke="none" stroke-width="1"/><line x1="930" y1="510.3" x2="1248" y2="510.3" stroke="#000" stroke-width="1.2"/><rect x="1153.5" y="450.5" width="31.0" height="61.0" fill="#634a30" stroke="#000" stroke-width="1.2"/><rect x="1153.5" y="450.5" width="31.0" height="3.5" fill="#4a2a1a" stroke="none" stroke-width="1"/><line x1="1155" y1="454" x2="1155" y2="511" stroke="#c0603a" stroke-width="1.5"/><line x1="1183" y1="454" x2="1183" y2="511" stroke="#c0603a" stroke-width="1.5"/><rect x="472.5" y="566" width="173.0" height="56" fill="#888888" stroke="none" stroke-width="1"/><rect x="479" y="566" width="79" height="51.5" fill="#b4b4b4" stroke="none" stroke-width="1"/><rect x="562" y="566" width="80.5" height="51.5" fill="#b4b4b4" stroke="none" stroke-width="1"/><rect x="479" y="617.5" width="166.5" height="4.5" fill="#c0c0c0" stroke="none" stroke-width="1"/><path d="M472.5 566 V622 H645.5 V566" fill="none" stroke="#000" stroke-width="1.5"/><path d="M479 566 V617.5 H558 V566 M562 566 V617.5 H642.5 V566" fill="none" stroke="#000" stroke-width="1.3"/><rect x="802.5" y="566" width="113.5" height="57.5" fill="#888888" stroke="none" stroke-width="1"/><rect x="806.5" y="566" width="102.0" height="53.5" fill="#b4b4b4" stroke="none" stroke-width="1"/><rect x="806.5" y="619.5" width="109.5" height="4.0" fill="#c0c0c0" stroke="none" stroke-width="1"/><rect x="908.5" y="600" width="5.5" height="19.5" fill="#c0c0c0" stroke="none" stroke-width="1"/><path d="M802.5 566 V623.5 H916 V566" fill="none" stroke="#000" stroke-width="1.5"/><path d="M806.5 566 V619.5 H908.5 V566" fill="none" stroke="#000" stroke-width="1.3"/><line x1="909" y1="566" x2="909" y2="600" stroke="#000" stroke-width="2.5"/><line x1="913" y1="566" x2="913" y2="600" stroke="#000" stroke-width="2.5"/></svg>
<div class="a" style="left:417px;top:155px;width:533px;height:409px;background:#ffffff;border-radius:8px 8px 0 0"></div>
<div class="a" style="left:426px;top:568px;width:524px;height:5px;background:linear-gradient(180deg,rgba(215,215,215,0.85),rgba(245,245,245,0.9));border-radius:0 0 6px 0"></div>
<div class="a" style="left:422px;top:160px;width:523px;height:4px;background:#2a303a;"></div>
<div class="a" style="left:422px;top:160px;width:4px;height:34px;background:#2a303a;"></div>
<div class="a" style="left:941px;top:160px;width:4px;height:34px;background:#2a303a;"></div>
<div class="a" style="left:941px;top:194px;width:9px;height:370px;background:linear-gradient(90deg,rgba(0,0,0,0.58),rgba(0,0,0,0.38) 45%,rgba(0,0,0,0.05) 80%,rgba(0,0,0,0));"></div>
<div class="a" style="left:426px;top:564px;width:524px;height:4px;background:linear-gradient(180deg,rgba(0,0,0,0.55),rgba(0,0,0,0.25));"></div>
<div class="a" style="left:426px;top:164px;width:515px;height:400px;background:#e6e6e6;box-shadow:0 0 6px 3px rgba(0,0,0,0.6);clip-path:polygon(-30px 30px,0 30px,0 420px,-30px 420px)"></div>
<div class="a" style="left:426px;top:164px;width:515px;height:400px;background:#e6e6e6;"></div>
<svg style="left:934px;top:557px;" width="16" height="16" viewBox="0 0 16 16"><g fill="#8fa4d0"><rect x="13" y="3" width="1.6" height="1.6"/><rect x="13" y="6" width="1.6" height="1.6"/><rect x="10" y="6" width="1.6" height="1.6"/><rect x="13" y="9" width="1.6" height="1.6"/><rect x="10" y="9" width="1.6" height="1.6"/><rect x="7" y="9" width="1.6" height="1.6"/><rect x="13" y="12" width="1.6" height="1.6"/><rect x="10" y="12" width="1.6" height="1.6"/><rect x="7" y="12" width="1.6" height="1.6"/><rect x="4" y="12" width="1.6" height="1.6"/></g></svg>
<div class="a" style="left:427px;top:164.5px;width:514px;height:49px;background:#e8e8e8;border:1.5px solid #c2d8dd;border-radius:5px"></div>
<div class="a" style="left:478px;top:169px;width:462px;height:40.5px;background:#7d8e9c;"></div>
<div class="a" style="left:835.5px;top:171px;width:104.5px;height:36.3px;background:#b9d0d6;"></div>
<div class="a" style="left:841.3px;top:175.2px;width:27.6px;height:27.6px;background:#e2e2e2;border:1px solid #6e6e6e"></div>
<div class="a" style="left:874.3px;top:175.2px;width:27.6px;height:27.6px;background:#e2e2e2;border:1px solid #6e6e6e"></div>
<div class="a" style="left:907.2px;top:175.2px;width:27.6px;height:27.6px;background:#e2e2e2;border:1px solid #6e6e6e"></div>
<div class="a" style="left:852px;top:193px;width:7px;height:2px;background:#7a7a7a;"></div>
<div class="a" style="left:882px;top:185px;width:12px;height:11px;background:transparent;border:1.5px solid #7a7a7a;border-top-width:2px"></div>
<svg style="left:915px;top:184px;" width="11" height="11" viewBox="0 0 11 11"><path d="M1 1 L10 10 M10 1 L1 10" stroke="#7a7a7a" stroke-width="1.8"/></svg>
<svg style="left:436px;top:172px;" width="30" height="30" viewBox="0 0 30 30"><g fill="none" stroke="#8f8226" stroke-width="1.3" stroke-linecap="round"><path d="M4.3 4.5 H19.8"/><path d="M19.8 4.5 L19.3 14"/><path d="M4.5 4.5 L3.6 23"/><path d="M5.5 4.6 C16 4.5 20 8 17.5 11.5 C16 13.5 10 13.5 5 13.5"/><path d="M5 5 L11 14.5 L21 22"/><path d="M10 13.5 C8 18 10 22 14 22.5 C17 23 20 22.5 21 22"/><ellipse cx="12.5" cy="21.5" rx="10.8" ry="6.3"/><path d="M4 23 H9"/></g></svg>
<div class="t" style="left:493.5px;top:179.56px;font-size:16px;color:#f2f5f7;transform:scaleX(0.8854);">Insert Vertical Wall posts for windows and Door</div>
<div class="a" style="left:437.5px;top:243.5px;width:491px;height:125px;background:#ffffff;border-radius:5px"></div>
<div class="a" style="left:439.5px;top:245px;width:487px;height:122px;background:#bcd3d8;border-radius:4px"></div>
<div class="a" style="left:441.5px;top:247px;width:483px;height:118px;background:#ffffff;border-radius:3px"></div>
<div class="a" style="left:443px;top:248px;width:481px;height:117.5px;background:#7d8e9c;"></div>
<div class="a" style="left:446px;top:233px;width:363.5px;height:21.5px;background:#bad1d6;border:1px solid #6a6a6a"></div>
<div class="t" style="left:448.7px;top:235.68px;font-size:15.5px;color:#234b4e;transform:scaleX(0.9697);-webkit-text-stroke:0.3px #234b4e">Properties</div>
<div class="t" style="left:447.8px;top:262.92px;font-size:19px;color:#e9eef1;transform:scaleX(0.8256);">Level</div>
<div class="t" style="left:447.5px;top:297.82px;font-size:19px;color:#e9eef1;transform:scaleX(0.8681);">Wall Type</div>
<div class="t" style="left:447.8px;top:332.92px;font-size:19px;color:#e9eef1;transform:scaleX(0.8793);">Wallpost Type</div>
<div class="a" style="left:641.5px;top:265.5px;width:280.5px;height:19.30000000000001px;background:#ffffff;border-left:1px solid #c8c8c8;border-top:1px solid #e8e8e8"></div>
<div class="t" style="left:646px;top:270.44px;font-size:10px;color:#111;transform:scaleX(0.9459);-webkit-text-stroke:0.15px #111">Level 1</div>
<svg style="left:910px;top:273.0px;" width="7" height="5" viewBox="0 0 7 5"><path d="M0.7 0.7 L3.5 3.5 L6.3 0.7" stroke="#555" stroke-width="1.1" fill="none"/></svg>
<div class="a" style="left:641.5px;top:300.5px;width:279.5px;height:18.80000000000001px;background:#ffffff;border-left:1px solid #c8c8c8;border-top:1px solid #e8e8e8"></div>
<div class="t" style="left:646px;top:305.44px;font-size:10px;color:#111;transform:scaleX(0.9904);-webkit-text-stroke:0.15px #111">Generic - 150mm</div>
<svg style="left:909px;top:308.0px;" width="7" height="5" viewBox="0 0 7 5"><path d="M0.7 0.7 L3.5 3.5 L6.3 0.7" stroke="#555" stroke-width="1.1" fill="none"/></svg>
<div class="a" style="left:641.5px;top:335.5px;width:280.5px;height:18.5px;background:#ffffff;border-left:1px solid #c8c8c8;border-top:1px solid #e8e8e8"></div>
<svg style="left:910px;top:343.0px;" width="7" height="5" viewBox="0 0 7 5"><path d="M0.7 0.7 L3.5 3.5 L6.3 0.7" stroke="#555" stroke-width="1.1" fill="none"/></svg>
<div class="a" style="left:440.5px;top:400px;width:488.5px;height:101.5px;background:#ffffff;border-radius:5px"></div>
<div class="a" style="left:442.5px;top:401.5px;width:484.5px;height:98.5px;background:#bcd3d8;border-radius:4px"></div>
<div class="a" style="left:444.5px;top:403.5px;width:480.5px;height:94.5px;background:#ffffff;border-radius:3px"></div>
<div class="a" style="left:446px;top:404.5px;width:478px;height:92.5px;background:#7d8e9c;"></div>
<div class="a" style="left:449px;top:387.8px;width:200px;height:21.5px;background:#bad1d6;border:1px solid #6a6a6a"></div>
<div class="t" style="left:451.5px;top:390.98px;font-size:15.5px;color:#234b4e;-webkit-text-stroke:0.3px #234b4e;white-space:pre">Horizontal distance from  W</div>
<div class="t" style="left:450.3px;top:420.02px;font-size:19px;color:#e9eef1;transform:scaleX(0.8882);">Distance from windows</div>
<div class="t" style="left:450.3px;top:453.92px;font-size:19px;color:#e9eef1;transform:scaleX(0.9013);">Distance from Door</div>
<div class="a" style="left:641.5px;top:355px;width:280px;height:145.5px;background:#ffffff;border:1px solid #646464;box-shadow:2px 2px 3px rgba(0,0,0,0.35)"></div>
<div class="t" style="left:647.3px;top:358.34px;font-size:10px;color:#000;transform:scaleX(0.9701);-webkit-text-stroke:0.2px #000">W250X73</div>
<div class="t" style="left:647.3px;top:374.39px;font-size:10px;color:#000;transform:scaleX(0.9454);-webkit-text-stroke:0.2px #000">W250X49.1</div>
<div class="t" style="left:647.3px;top:390.44px;font-size:10px;color:#000;transform:scaleX(0.9644);-webkit-text-stroke:0.2px #000">WP.V2.Hb30</div>
<div class="t" style="left:647.3px;top:406.49px;font-size:10px;color:#000;transform:scaleX(0.9290);-webkit-text-stroke:0.2px #000">WP.V2.Hb15</div>
<div class="t" style="left:647.3px;top:422.54px;font-size:10px;color:#000;transform:scaleX(0.9194);-webkit-text-stroke:0.2px #000">WP.V2.Br10</div>
<div class="t" style="left:647.3px;top:438.59px;font-size:10px;color:#000;transform:scaleX(0.9432);-webkit-text-stroke:0.2px #000">WP.V1.Hb30</div>
<div class="t" style="left:647.3px;top:454.64px;font-size:10px;color:#000;transform:scaleX(0.9432);-webkit-text-stroke:0.2px #000">WP.V1.Hb20</div>
<div class="t" style="left:647.3px;top:470.69px;font-size:10px;color:#000;transform:scaleX(0.9148);-webkit-text-stroke:0.2px #000">WP.V1.Hb15</div>
<div class="t" style="left:647.3px;top:486.74px;font-size:10px;color:#000;transform:scaleX(0.8971);-webkit-text-stroke:0.2px #000">WP.V1.Br10</div>
<div class="a" style="left:646px;top:514.2px;width:112.70000000000005px;height:34.4px;background:#7d8e9c;border:2px solid #bcd3d8;background:linear-gradient(180deg,#7d8e9c 0%,#7d8e9c 40%,#6e6f73 100%)"></div>
<div class="t" style="left:681.85px;top:523.68px;font-size:15.5px;color:#ffffff;font-weight:bold;transform:scaleX(0.9714);">Insert</div>
<div class="a" style="left:810.2px;top:514.2px;width:119.59999999999991px;height:34.4px;background:#7d8e9c;border:2px solid #bcd3d8;background:linear-gradient(180deg,#7d8e9c 0%,#7d8e9c 40%,#6e6f73 100%)"></div>
<div class="t" style="left:846.25px;top:523.68px;font-size:15.5px;color:#ffffff;font-weight:bold;transform:scaleX(0.9346);">Cancle</div>
<svg style="left:1238px;top:230px;" width="100" height="82" viewBox="0 0 100 82">
      <defs><radialGradient id="sh" cx="0.5" cy="0.5" r="0.5"><stop offset="0" stop-color="#000" stop-opacity="0.12"/><stop offset="1" stop-color="#000" stop-opacity="0"/></radialGradient></defs>
      <path d="M5 46 A44 26 0 1 0 93 46 A44 26 0 1 0 5 46Z M12 46 A37 20 0 1 1 86 46 A37 20 0 1 1 12 46Z" fill="#f6f6f6" fill-rule="evenodd" stroke="#d4d4d4" stroke-width="1"/>
      <ellipse cx="49" cy="50" rx="26" ry="10" fill="url(#sh)"/>
      <path d="M31 4 H48 L49 21 H31Z" fill="#e8e8e8" stroke="#b8b8b8" stroke-width="0.8"/>
      <path d="M31 21 H66 V50 H32Z" fill="#ebebeb" stroke="#a8a8a8" stroke-width="0.8"/>
      <path d="M31 4 H66 V21 H31Z" fill="#ececec" stroke="#b0b0b0" stroke-width="0.8"/>
      <path d="M32 21 H66" stroke="#999" stroke-width="1"/>
      <text x="49" y="15" font-size="6.5" font-weight="bold" fill="#888" text-anchor="middle" font-family="Liberation Sans">TOP</text>
      <text x="49" y="39.5" font-size="7.8" fill="#777" text-anchor="middle" font-family="Liberation Sans">FRONT</text>
      <text x="7" y="46" font-size="7" fill="#bbb" font-family="Liberation Sans" transform="scale(1,1)">W</text>
      <text x="85" y="47" font-size="7" fill="#bbb" font-family="Liberation Sans">E</text>
      <text x="46" y="74" font-size="7" fill="#bbb" font-family="Liberation Sans">S</text>
    </svg>
<div class="a" style="left:1314px;top:313px;width:34.5px;height:117px;background:#f3f3f3;border:2px solid #b8b8b8;border-radius:5px"></div>
<svg style="left:1337px;top:316px;" width="9" height="9" viewBox="0 0 9 9"><circle cx="4.5" cy="4.5" r="4" fill="#c8c8c8"/><path d="M2.5 2.5 L6.5 6.5 M6.5 2.5 L2.5 6.5" stroke="#fff" stroke-width="1"/></svg>
<svg style="left:1320px;top:334px;" width="22" height="22" viewBox="0 0 22 22"><path d="M11 1 H21 V11 A10 10 0 1 1 11 1Z" fill="#e8e8e8" stroke="#8a8a8a" stroke-width="1.2"/><circle cx="11" cy="11" r="6" fill="#f4f4f4" stroke="#7a7a7a" stroke-width="1.2"/><path d="M4 17 L7 15 M18 17 L15 15" stroke="#8a8a8a"/></svg>
<svg style="left:1328px;top:363px;" width="7" height="4" viewBox="0 0 7 4"><path d="M0 0 H6.5 L3.25 3.5Z" fill="#8a8a8a"/></svg>
<div class="a" style="left:1318px;top:371px;width:26px;height:1px;background:#b8b8b8;"></div>
<svg style="left:1322px;top:380px;" width="18" height="16" viewBox="0 0 18 16"><rect x="0" y="0" width="10.5" height="10.5" fill="#a8d090" stroke="#6aaa50" stroke-width="1"/><circle cx="12" cy="10" r="3.8" fill="#eef4f8" stroke="#666" stroke-width="1.2"/><path d="M14.7 12.7 L17.5 15.5" stroke="#555" stroke-width="1.6"/></svg>
<svg style="left:1328px;top:405px;" width="7" height="4" viewBox="0 0 7 4"><path d="M0 0 H6.5 L3.25 3.5Z" fill="#8a8a8a"/></svg>
<svg style="left:1337px;top:418px;" width="9" height="9" viewBox="0 0 9 9"><circle cx="4.5" cy="4.5" r="4" fill="#c8c8c8"/><rect x="2" y="4" width="5" height="1.2" fill="#fff"/></svg>
</body></html>
